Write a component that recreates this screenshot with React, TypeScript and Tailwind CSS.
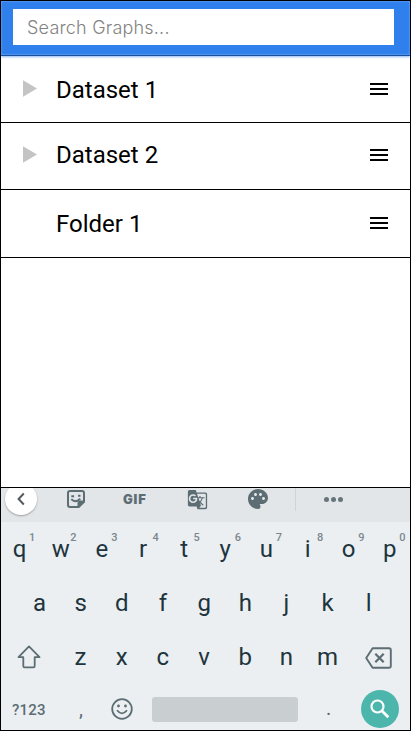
import React from "react";
import { MdGTranslate, MdPalette } from "react-icons/md";

const FONT = "font-['Roboto',sans-serif]";

function Burger() {
  return (
    <div className="flex h-3 w-[18px] flex-col justify-between">
      <div className="h-[2px] bg-black" />
      <div className="h-[2px] bg-black" />
      <div className="h-[2px] bg-black" />
    </div>
  );
}

function Row({ label, arrow, box, lift }: { label: string; arrow?: boolean; box: string; lift: string }) {
  return (
    <div className={`flex shrink-0 items-start border-b border-black pr-[22px] pl-[22px] ${box}`}>
      <svg className="h-[17px] w-[14px] shrink-0" viewBox="0 0 14 17">
        {arrow && <path d="M0 .3 14 8.5 0 16.7z" fill="#c4c4c4" />}
      </svg>
      <span className={`ml-[19px] flex-1 text-2xl leading-7 ${lift}`}>{label}</span>
      <div className="mt-[3px]">
        <Burger />
      </div>
    </div>
  );
}

function Key({ letter, hint }: { letter: string; hint?: string }) {
  return (
    <div className="relative w-[41.15px] shrink-0 text-center text-2xl leading-7">
      {letter}
      {hint && <span className="absolute -top-[3px] left-[30px] text-[11px] leading-3 font-medium text-[#7b878c]">{hint}</span>}
    </div>
  );
}

function Toolbar() {
  return (
    <div className="flex h-[34px] shrink-0 items-start overflow-hidden bg-[#e2e6e9] text-[#5c6d74]">
      <div className="-mt-[5px] ml-1 flex size-8 shrink-0 items-center justify-center rounded-full bg-white shadow-[0_1px_2px_rgba(0,0,0,0.3)]">
        <svg className="size-4" viewBox="0 0 16 16" fill="none" stroke="#505a5f" strokeWidth="2">
          <path d="M10.8 2.5 5.6 8l5.2 5.5" />
        </svg>
      </div>
      <svg className="mt-[2px] ml-[30px] h-[18px] w-[18px] shrink-0" viewBox="0 0 18 18" fill="none" stroke="currentColor" strokeWidth="2">
        <path d="M3 1h12q2 0 2 2v8.5L11.5 17H3q-2 0-2-2V3q0-2 2-2Z" />
        <path d="M17 11.5h-3.5q-2 0-2 2V17Z" fill="currentColor" />
        <path d="M4.3 9.2q3.8 4.2 9-.5M4.3 6.2h2.8M11 5.8h2.5" />
      </svg>
      <span className="mt-[2px] ml-[38px] w-[26px] shrink-0 font-['Inter',sans-serif] text-[13px] leading-[18px] font-black tracking-[0.8px]">GIF</span>
      <MdGTranslate className="mt-[1px] ml-[38px] size-[21px] shrink-0" />
      <MdPalette className="-mt-px ml-[38px] size-6 shrink-0" />
      <div className="ml-[25px] h-[23px] w-px shrink-0 bg-[#cfd4d8]" />
      <div className="mt-[9px] ml-7 flex gap-[2px]">
        <div className="size-[5px] rounded-full bg-[#66757c]" />
        <div className="size-[5px] rounded-full bg-[#66757c]" />
        <div className="size-[5px] rounded-full bg-[#66757c]" />
      </div>
    </div>
  );
}

function Keyboard() {
  return (
    <div className="flex h-[242px] shrink-0 flex-col overflow-hidden bg-[#ebeff2] text-[#20343d]">
      <Toolbar />
      <div className="mt-[13px] -ml-[2px] flex h-[54px] shrink-0">
        {[..."qwertyuiop"].map((l, i) => (
          <Key key={l} letter={l} hint={String((i + 1) % 10)} />
        ))}
      </div>
      <div className="ml-[18px] flex h-[54px] shrink-0">
        {[..."asdfghjkl"].map((l) => (
          <Key key={l} letter={l} />
        ))}
      </div>
      <div className="flex h-[43px] shrink-0">
        <svg className="mt-[2px] ml-4 h-6 w-6 shrink-0" viewBox="0 0 24 24" fill="none" stroke="#5c6d74" strokeWidth="1.8" strokeLinejoin="round">
          <path d="M12 1.4 1.5 12.2H6.3V21q0 1.3 1.3 1.3h8.8q1.3 0 1.3-1.3v-8.8h4.8Z" />
        </svg>
        <div className="ml-[19px] flex">
          {[..."zxcvbnm"].map((l) => (
            <Key key={l} letter={l} />
          ))}
        </div>
        <svg className="mt-[4px] ml-[17px] h-[22px] w-[27px] shrink-0" viewBox="0 0 27 22" fill="none" stroke="#5c6d74" strokeWidth="1.9" strokeLinejoin="round">
          <path d="M7.6 1.2H24q1.8 0 1.8 1.8v16q0 1.8-1.8 1.8H7.6L1.2 11Z" />
          <path d="m10.3 6.7 8.4 8.6m0-8.6-8.4 8.6" strokeWidth="2.2" />
        </svg>
      </div>
      <div className="flex h-[55px] shrink-0 items-start text-[#5c6d74]">
        <span className="mt-[14px] ml-[11px] w-[54px] text-[15px] leading-5 font-medium tracking-[0.2px]">?123</span>
        <span className="mt-[11px] ml-[13px] w-[33px] text-xl leading-6">,</span>
        <svg className="mt-[12px] -ml-px size-[22px] shrink-0" viewBox="0 0 22 22" fill="none" stroke="#5c6d74" strokeWidth="1.8">
          <circle cx="11" cy="11" r="9.8" />
          <path d="M6 12.3q5 6.2 10 0" />
          <circle cx="7.5" cy="8" r="1.4" fill="#5c6d74" stroke="none" />
          <circle cx="14.5" cy="8" r="1.4" fill="#5c6d74" stroke="none" />
        </svg>
        <div className="mt-[11px] ml-[19px] h-[25px] w-[146px] shrink-0 rounded-[3px] bg-[#c9ced1]" />
        <span className="mt-[10px] ml-7 w-9 text-xl leading-6">.</span>
        <div className="mt-[4px] -ml-px flex size-[38px] shrink-0 items-center justify-center rounded-full bg-[#4db6ac]">
          <svg className="size-[20px]" viewBox="0 0 20 20" fill="none" stroke="white" strokeWidth="2.2">
            <circle cx="7.5" cy="7.5" r="6" />
            <path d="m11.8 11.8 6.5 6.5" strokeWidth="2.8" />
          </svg>
        </div>
      </div>
    </div>
  );
}

export default function App() {
  return (
    <div className={`flex h-[731px] w-[411px] flex-col overflow-hidden border border-black bg-white text-black ${FONT}`}>
      <header className="relative z-10 h-[55px] shrink-0 border-b border-[#1c4f9c] bg-[#2f80ed] pt-2 pl-3 shadow-[0_1px_2px_rgba(47,128,237,0.55),inset_0_0_2px_rgba(255,255,255,0.5)]">
        <input
          className="block h-9 w-[381px] bg-white px-[14px] font-['Inter',sans-serif] text-[18px] font-light tracking-[0.2px] outline-none placeholder:text-[#828282]"
          placeholder="Search Graphs..."
        />
      </header>
      <Row label="Dataset 1" arrow box="h-[67px] pt-6" lift="-mt-[4px]" />
      <Row label="Dataset 2" arrow box="h-[67px] pt-[23px]" lift="-mt-[5px]" />
      <Row label="Folder 1" box="h-[68px] pt-6" lift="-mt-[4px]" />
      <div className="h-[230px] shrink-0 border-b border-black" />
      <Keyboard />
    </div>
  );
}
